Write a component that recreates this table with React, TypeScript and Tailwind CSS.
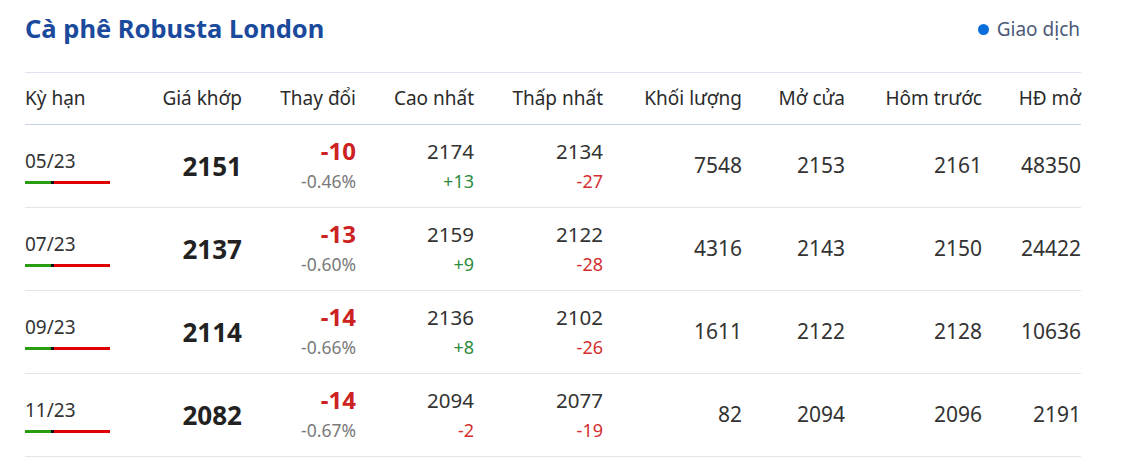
import React from 'react';

type Row = {
  term: string;
  price: number;
  change: number;
  pct: string;
  high: number;
  highDiff: number;
  low: number;
  lowDiff: number;
  volume: number;
  open: number;
  prev: number;
  oi: number;
};

const rows: Row[] = [
  { term: '05/23', price: 2151, change: -10, pct: '-0.46%', high: 2174, highDiff: 13, low: 2134, lowDiff: -27, volume: 7548, open: 2153, prev: 2161, oi: 48350 },
  { term: '07/23', price: 2137, change: -13, pct: '-0.60%', high: 2159, highDiff: 9, low: 2122, lowDiff: -28, volume: 4316, open: 2143, prev: 2150, oi: 24422 },
  { term: '09/23', price: 2114, change: -14, pct: '-0.66%', high: 2136, highDiff: 8, low: 2102, lowDiff: -26, volume: 1611, open: 2122, prev: 2128, oi: 10636 },
  { term: '11/23', price: 2082, change: -14, pct: '-0.67%', high: 2094, highDiff: -2, low: 2077, lowDiff: -19, volume: 82, open: 2094, prev: 2096, oi: 2191 },
];

const cols = 'grid grid-cols-[115px_102px_114px_118px_129px_139px_103px_137px_99px]';

const diffClass = (n: number) => (n >= 0 ? 'text-[#2e8b3e]' : 'text-[#d32f2f]');
const fmt = (n: number) => (n > 0 ? `+${n}` : `${n}`);

const App: React.FC = () => {
  return (
    <div className="w-[1121px] h-[474px] bg-white px-[25px] pt-[14px] text-[#2b2b2b] font-['Segoe_UI','Noto_Sans','Open_Sans',sans-serif]">
      <div className="flex items-center justify-between w-[1056px] h-[30px]">
        <h1 className="text-[25.5px] font-bold text-[#1b4a9c] leading-none">Cà phê Robusta London</h1>
        <div className="flex items-center gap-[8px] mr-[1px]">
          <span className="w-[11px] h-[11px] rounded-full bg-[#0a6fdc]" />
          <span className="text-[19px] text-[#4b5a78]">Giao dịch</span>
        </div>
      </div>

      {/* Table */}
      <div className="w-[1056px] mt-[28px] border-t border-[#dde3ec]">
        <div className={`${cols} h-[52px] items-center border-b border-[#c9d3df] text-[19px] text-[#2b2b2b]`}>
          <div>Kỳ hạn</div>
          <div className="text-right">Giá khớp</div>
          <div className="text-right">Thay đổi</div>
          <div className="text-right">Cao nhất</div>
          <div className="text-right">Thấp nhất</div>
          <div className="text-right">Khối lượng</div>
          <div className="text-right">Mở cửa</div>
          <div className="text-right">Hôm trước</div>
          <div className="text-right">HĐ mở</div>
        </div>

        {rows.map((r) => (
          <div key={r.term} className={`${cols} h-[83px] items-center border-b border-[#e1e6ed]`}>
            <div className="self-start flex flex-col pt-[25px]">
              <span className="text-[19px] text-[#333] leading-[22px]">{r.term}</span>
              <div className="flex w-[85px] h-[3px] mt-[9px]">
                <div className="w-[26px] bg-[#2a9c0f]" />
                <div className="w-[3px] bg-[#111]" />
                <div className="flex-1 bg-[#e00000]" />
              </div>
            </div>
            <div className="text-right text-[26px] font-bold text-[#222]">{r.price}</div>
            <div className="flex flex-col items-end">
              <span className="text-[24px] font-bold text-[#cc2222] leading-[30px]">{r.change}</span>
              <span className="text-[17.5px] text-[#7a7a7a] leading-[30px]">{r.pct}</span>
            </div>
            <div className="flex flex-col items-end">
              <span className="text-[20.5px] text-[#333] leading-[30px]">{r.high}</span>
              <span className={`text-[18px] leading-[30px] ${diffClass(r.highDiff)}`}>{fmt(r.highDiff)}</span>
            </div>
            <div className="flex flex-col items-end">
              <span className="text-[20.5px] text-[#333] leading-[30px]">{r.low}</span>
              <span className={`text-[18px] leading-[30px] ${diffClass(r.lowDiff)}`}>{fmt(r.lowDiff)}</span>
            </div>
            <div className="text-right text-[21px] text-[#333]">{r.volume}</div>
            <div className="text-right text-[21px] text-[#333]">{r.open}</div>
            <div className="text-right text-[21px] text-[#333]">{r.prev}</div>
            <div className="text-right text-[21px] text-[#333]">{r.oi}</div>
          </div>
        ))}
      </div>
    </div>
  );
};

export default App;
